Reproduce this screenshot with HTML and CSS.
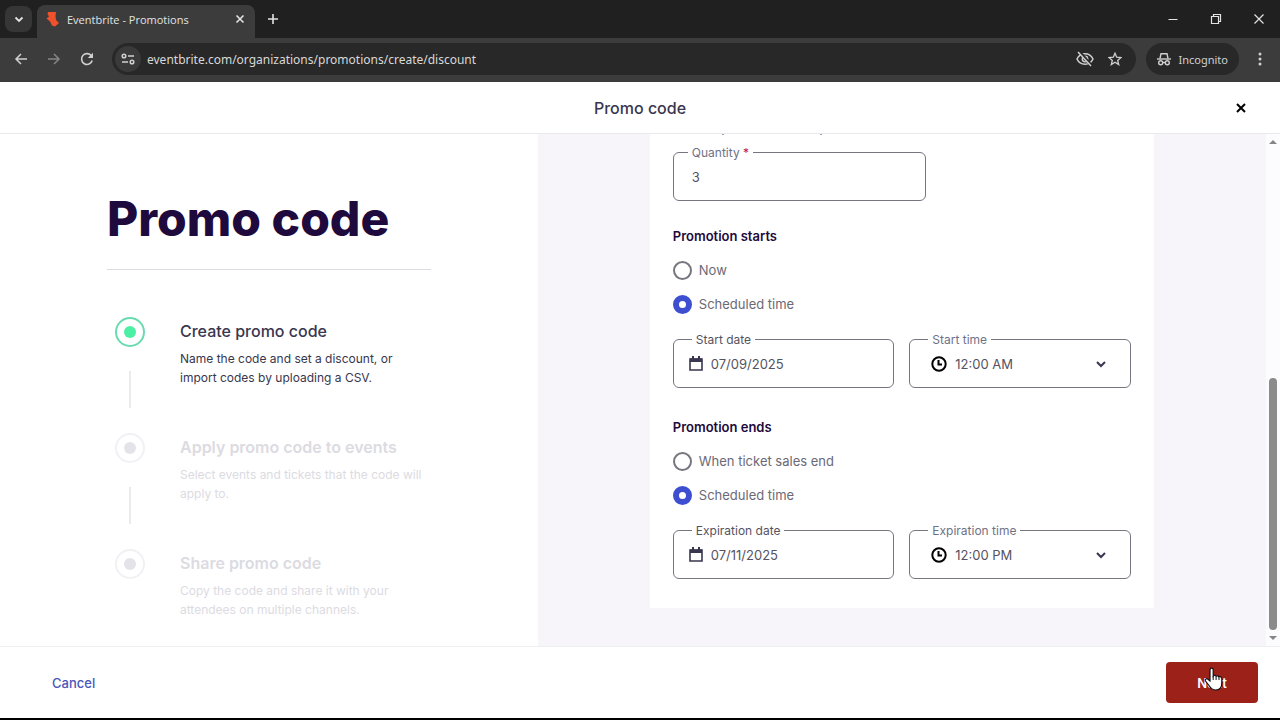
FILE: index.html
```html
<!DOCTYPE html>
<html lang="en">
<head>
    <meta charset="UTF-8">
    <meta name="viewport" content="width=device-width, initial-scale=1.0">
    <title>Eventbrite - Promotions</title>
    <link rel="stylesheet" href="styles.css">
</head>
<body>

    <!-- Browser tabs -->
    <div class="tab-strip">
        <button class="tab-search" aria-label="Search tabs">
            <svg width="10" height="10" viewBox="0 0 10 10"><path d="M1.5 3.5 5 7l3.5-3.5" fill="none" stroke="currentColor" stroke-width="1.8"/></svg>
        </button>
        <div class="tab">
            <svg width="14" height="16" viewBox="0 0 14 16"><path d="M2 1h8l-.5 4 .5 4 3 3-4 3.500-3-1-2-4L.5 7.500 3 5.500 1.500 3z" fill="#f0512d"/></svg>
            <span class="tab-title">Eventbrite - Promotions</span>
            <button class="icon-btn" aria-label="Close tab">
                <svg width="10" height="10" viewBox="0 0 10 10"><path d="M1.500 1.500l7 7M8.500 1.500l-7 7" stroke="currentColor" stroke-width="1.600"/></svg>
            </button>
        </div>
        <button class="icon-btn new-tab" aria-label="New tab">
            <svg width="12" height="12" viewBox="0 0 12 12"><path d="M6 1v10M1 6h10" stroke="currentColor" stroke-width="1.600"/></svg>
        </button>
        <div class="window-controls">
            <button class="icon-btn" aria-label="Minimize"><svg width="12" height="12" viewBox="0 0 12 12"><path d="M1.500 6.500h9" stroke="currentColor"/></svg></button>
            <button class="icon-btn" aria-label="Restore"><svg width="12" height="12" viewBox="0 0 12 12"><path d="M1.500 3.500h7v7h-7zM3.500 3.500v-2h7v7h-2" fill="none" stroke="currentColor" stroke-width="1.200"/></svg></button>
            <button class="icon-btn" aria-label="Close"><svg width="12" height="12" viewBox="0 0 12 12"><path d="M1.500 1.500l9 9M10.500 1.500l-9 9" stroke="currentColor" stroke-width="1.200"/></svg></button>
        </div>
    </div>

    <div class="toolbar">
        <div class="nav-buttons">
            <button class="icon-btn" aria-label="Back"><svg width="14" height="14" viewBox="0 0 14 14"><path d="M13 7H2M7 2 2 7l5 5" fill="none" stroke="currentColor" stroke-width="1.500"/></svg></button>
            <button class="icon-btn dim" aria-label="Forward"><svg width="14" height="14" viewBox="0 0 14 14"><path d="M1 7h11M7 2l5 5-5 5" fill="none" stroke="currentColor" stroke-width="1.500"/></svg></button>
            <button class="icon-btn" aria-label="Reload"><svg width="14" height="14" viewBox="0 0 14 14"><path d="M12.200 8.500A5.400 5.400 0 1 1 11.500 4" fill="none" stroke="currentColor" stroke-width="1.600"/><path d="M13 .8V6H7.800z" fill="currentColor"/></svg></button>
        </div>
        <div class="omnibox">
            <button class="site-info" aria-label="Site information">
                <svg width="14" height="14" viewBox="0 0 14 14" fill="none" stroke="currentColor" stroke-width="1.500"><circle cx="3" cy="4" r="1.800"/><path d="M7 4h6M1 10h6"/><circle cx="11" cy="10" r="1.800"/></svg>
            </button>
            <input class="url" type="text" aria-label="Address" value="eventbrite.com/organizations/promotions/create/discount">
            <button class="icon-btn" aria-label="Tracking blocked">
                <svg width="18" height="16" viewBox="0 0 18 16" fill="none" stroke="currentColor" stroke-width="1.500"><path d="M1 8c3.200-7 12.800-7 16 0-3.200 7-12.800 7-16 0z"/><circle cx="9" cy="8" r="2.700"/><path d="M3.500.8l12 14" stroke="#282828" stroke-width="3"/><path d="M2 1l13 14"/></svg>
            </button>
            <button class="icon-btn" aria-label="Bookmark">
                <svg width="14" height="14" viewBox="0 0 14 14"><path d="M7 1.200l1.700 4 4.300.4-3.300 2.800 1 4.200L7 10.300l-3.700 2.300 1-4.200L1 5.600l4.300-.4z" fill="none" stroke="currentColor" stroke-width="1.300"/></svg>
            </button>
        </div>
        <button class="incognito">
            <svg width="14" height="14" viewBox="0 0 14 14" fill="none" stroke="currentColor" stroke-width="1.400"><path d="M0 7h14"/><path d="M3 6.500 4 1.700h6l1 4.800"/><circle cx="3.700" cy="10.800" r="2"/><circle cx="10.300" cy="10.800" r="2"/><path d="M5.700 10.500h2.600"/></svg>
            Incognito
        </button>
        <button class="icon-btn" aria-label="Menu">
            <svg width="4" height="14" viewBox="0 0 4 14" fill="currentColor"><circle cx="2" cy="2" r="1.500"/><circle cx="2" cy="7" r="1.500"/><circle cx="2" cy="12" r="1.500"/></svg>
        </button>
    </div>

    <header class="page-header">
        <h2>Promo code</h2>
        <button class="close-btn" aria-label="Close">
            <svg width="12" height="12" viewBox="0 0 12 12"><path d="M2 2l8 8M10 2l-8 8" stroke="currentColor" stroke-width="2"/></svg>
        </button>
    </header>

    <main class="content">
        <aside class="sidebar">
            <h1>Promo code</h1>
            <ol class="steps">
                <li class="step active">
                    <div class="marker"><span class="dot"></span></div>
                    <div class="step-text">
                        <h3>Create promo code</h3>
                        <p>Name the code and set a discount, or import codes by uploading a CSV.</p>
                    </div>
                </li>
                <li class="step">
                    <div class="marker"><span class="dot"></span></div>
                    <div class="step-text">
                        <h3>Apply promo code to events</h3>
                        <p>Select events and tickets that the code will apply to.</p>
                    </div>
                </li>
                <li class="step">
                    <div class="marker"><span class="dot"></span></div>
                    <div class="step-text">
                        <h3>Share promo code</h3>
                        <p>Copy the code and share it with your attendees on multiple channels.</p>
                    </div>
                </li>
            </ol>
        </aside>

        <div class="form-panel">
            <form class="card">
                <svg class="cut-line" width="160" height="2" viewBox="0 0 160 2"><path d="M49 0h2v1h-2zM147 0h2v1h-2z" fill="#a5a3ac"/></svg>
                <div class="field quantity">
                    <label for="quantity">Quantity <span class="required">*</span></label>
                    <input id="quantity" type="text" value="3">
                </div>

                <section class="period">
                    <h4>Promotion starts</h4>
                    <label class="radio"><input type="radio" name="starts">Now</label>
                    <label class="radio"><input type="radio" name="starts" checked>Scheduled time</label>
                    <div class="row">
                        <div class="field date">
                            <label for="start-date">Start date</label>
                            <svg width="14" height="16" viewBox="0 0 14 16"><path d="M1 3h12v11H1z" fill="none" stroke="#39364f" stroke-width="1.600"/><path d="M1 2.500h12V6H1zM3 0h2v3H3zM9 0h2v3H9z" fill="#39364f"/></svg>
                            <input id="start-date" type="text" value="07/09/2025">
                        </div>
                        <div class="field time">
                            <label for="start-time">Start time</label>
                            <svg width="16" height="16" viewBox="0 0 16 16" fill="none" stroke="#000" stroke-width="2"><circle cx="8" cy="8" r="6.700"/><path d="M7.500 4v4.500H11"/></svg>
                            <select id="start-time"><option>12:00 AM</option></select>
                            <svg class="chevron" width="10" height="8" viewBox="0 0 10 8"><path d="M1 2l4 4 4-4" fill="none" stroke="#39364f" stroke-width="2"/></svg>
                        </div>
                    </div>
                </section>

                <section class="period">
                    <h4>Promotion ends</h4>
                    <label class="radio"><input type="radio" name="ends">When ticket sales end</label>
                    <label class="radio"><input type="radio" name="ends" checked>Scheduled time</label>
                    <div class="row">
                        <div class="field date">
                            <label for="end-date">Expiration date</label>
                            <svg width="14" height="16" viewBox="0 0 14 16"><path d="M1 3h12v11H1z" fill="none" stroke="#39364f" stroke-width="1.600"/><path d="M1 2.500h12V6H1zM3 0h2v3H3zM9 0h2v3H9z" fill="#39364f"/></svg>
                            <input id="end-date" type="text" value="07/11/2025">
                        </div>
                        <div class="field time">
                            <label for="end-time">Expiration time</label>
                            <svg width="16" height="16" viewBox="0 0 16 16" fill="none" stroke="#000" stroke-width="2"><circle cx="8" cy="8" r="6.700"/><path d="M7.500 4v4.500H11"/></svg>
                            <select id="end-time"><option>12:00 PM</option></select>
                            <svg class="chevron" width="10" height="8" viewBox="0 0 10 8"><path d="M1 2l4 4 4-4" fill="none" stroke="#39364f" stroke-width="2"/></svg>
                        </div>
                    </div>
                </section>
            </form>
        </div>

        <div class="scrollbar">
            <svg width="8" height="6" viewBox="0 0 8 6"><path d="M0 5l4-4 4 4z" fill="#858585"/></svg>
            <span class="thumb"></span>
            <svg width="8" height="6" viewBox="0 0 8 6"><path d="M0 1l4 4 4-4z" fill="#858585"/></svg>
        </div>
    </main>

    <footer class="actions">
        <a class="cancel" href="#">Cancel</a>
        <button class="next">Next
            <svg class="pointer" width="20" height="24" viewBox="0 0 20 24"><path d="M6 14V3c0-2.400 3.200-2.400 3.200 0v6c.8-1.200 2.600-.8 2.900.3.900-.9 2.500-.5 2.800.7 1.300-.7 2.900 0 2.900 1.600V16c0 4-2.300 7-6 7-3.600 0-5.300-2-6.800-4.500L1.500 14c-.8-1.700 1-3 2.500-1.800z" fill="#fff" stroke="#111" stroke-width="1.200"/><path d="M9.200 9v4M12.100 10v3M15 10.500V13" stroke="#111"/></svg>
        </button>
    </footer>

</body>
</html>
```
FILE: styles.css
```css
* { box-sizing: border-box; margin: 0; padding: 0; }
body {
    display: flex; flex-direction: column;
    min-height: 100vh;
    font-family: Inter, "Liberation Sans", sans-serif;
    font-size: 13px; color: #39364f; background: #fff;
    border-bottom: 2px solid #000;
}
button, input, select { font: inherit; color: inherit; border: none; background: none; outline: none; }
button { cursor: pointer; }
svg { display: block; flex-shrink: 0; }

/* browser bar */
.tab-strip {
    display: flex; align-items: center;
    height: 38px; padding-left: 5px;
    background: #202020; color: #e3e3e3;
    font-family: "Open Sans", "Noto Sans", sans-serif; font-size: 11px;
}
.tab-search {
    display: flex; align-items: center; justify-content: center;
    width: 27px; height: 26px; margin-right: 5px;
    background: #363636; border-radius: 8px;
}
.tab {
    display: flex; align-items: center; gap: 7px;
    align-self: flex-end;
    width: 218px; height: 33px; padding: 0 10px 5px 9px;
    background: #3c3c3c; border-radius: 8px 8px 0 0;
}
.tab-title { flex: 1; white-space: nowrap; }
.icon-btn { display: flex; align-items: center; justify-content: center; }
.new-tab { margin-left: 12px; }
.window-controls { display: flex; gap: 31px; margin-left: auto; padding-right: 15px; }
.toolbar {
    display: flex; align-items: center; gap: 10px;
    height: 44px; padding: 0 18px 2px 14px;
    background: #3c3c3c; color: #d0d0d0;
    font-family: "Noto Sans", "Open Sans", sans-serif; font-size: 12px;
}
.nav-buttons { display: flex; gap: 19px; margin-right: 8px; }
.dim { color: #858585; }
.omnibox {
    display: flex; align-items: center; gap: 14px; flex: 1;
    height: 32px; padding: 0 14px 0 3px;
    background: #282828; border-radius: 16px;
}
.site-info {
    display: flex; align-items: center; justify-content: center;
    width: 26px; height: 26px; margin-right: -8px;
    background: #3a3a3a; border-radius: 50%;
}
.url { flex: 1; min-width: 0; color: #d8d8d8; }
.incognito {
    display: flex; align-items: center; gap: 8px;
    height: 32px; padding: 0 11px; margin-right: 9px;
    background: #282828; border-radius: 16px; font-size: 11px;
}

/* page */
.page-header {
    display: grid; grid-template-columns: 1fr auto 1fr; align-items: center;
    height: 52px; padding-right: 33px;
    border-bottom: 1px solid #e9e8ed;
}
.page-header h2 { grid-column: 2; padding-left: 33px; font-size: 16px; font-weight: 500; }
.close-btn { justify-self: end; color: #000; }
.content { display: flex; flex: 1; }
.sidebar { width: 42%; padding: 56px 107px 20px; }
.sidebar h1 {
    padding-bottom: 21px; border-bottom: 1px solid #dbdae3;
    font-size: 48px; line-height: 58px; font-weight: 800;
    color: #1e0a3c; white-space: nowrap;
}
.steps { padding: 47px 0 0 8px; list-style: none; }
.step { display: flex; gap: 35px; height: 116px; color: #dcdbe2; }
.step:last-child { height: auto; }
.marker { display: flex; flex-direction: column; align-items: center; }
.dot { width: 30px; height: 30px; border: 2px solid #f1f0f4; border-radius: 50%; }
.dot::before {
    content: ""; display: block;
    width: 12px; height: 12px; margin: 7px;
    background: #e4e3e9; border-radius: 50%;
}
.step:not(:last-child) .marker::after {
    content: ""; width: 2px; height: 37px; margin-top: 24px; background: #ebeaef;
}
.step h3 { font-size: 16px; line-height: 28px; font-weight: 600; white-space: nowrap; }
.step p { width: 250px; margin-top: 4px; font-size: 12px; line-height: 19px; }
.active { color: #39364f; }
.active h3 { font-weight: 500; }
.active .dot { border-color: #6adbb0; }
.active .dot::before { background: #4cefa4; }

.form-panel { flex: 1; padding-bottom: 38px; background: #f7f5f9; }
.card {
    max-width: 504px; margin: 0 auto; padding: 0 23px 29px;
    background: #fff;
}
.cut-line { margin-bottom: 16px; }
.field {
    position: relative;
    display: flex; align-items: center;
    min-width: 0; height: 49px;
    border: 1px solid #77757f; border-radius: 6px;
}
.field label {
    position: absolute; top: -8px; left: 18px;
    padding: 0 4px; background: #fff; color: #6f7287;
    font-size: 12px; line-height: 16px;
}
.field input, .field select { flex: 1; min-width: 0; color: #55535f; }
.quantity { max-width: 253px; padding-left: 18px; }
.quantity label { left: 14px; }
.required { color: #c5162e; }
.date { padding-left: 15px; gap: 8px; }
.date label { color: #55535f; }
.time { padding: 0 24px 0 21px; gap: 8px; }
.time select { appearance: none; }
.period { margin-top: 25px; }
.period + .period { margin-top: 29px; }
.period h4 { font-size: 13px; line-height: 20px; font-weight: 600; color: #1e0a3c; }
.radio {
    display: flex; align-items: center; gap: 7px;
    height: 20px; margin-top: 14px; color: #6b6976;
}
.radio input {
    appearance: none; width: 19px; height: 19px;
    border: 2px solid #77757f; border-radius: 50%;
}
.radio input:checked { border: 6px solid #3d4fd0; }
.row { display: grid; grid-template-columns: 1fr 1fr; gap: 15px; margin-top: 25px; }
.scrollbar {
    display: flex; flex-direction: column; align-items: center;
    width: 14px; padding: 5px 0; background: #fcfbfd;
}
.thumb { width: 8px; height: 252px; margin: auto 0 5px; background: #8b8b8b; border-radius: 4px; }

.actions {
    display: flex; align-items: center; justify-content: space-between;
    height: 72px; padding: 0 22px 0 52px;
    border-top: 1px solid #eeedf2;
}
.cancel { color: #4a56b8; font-weight: 500; text-decoration: none; }
.next {
    position: relative;
    width: 92px; height: 41px;
    background: #9c2118; border-radius: 4px; color: #fff; font-weight: 600;
}
/* hand cursor resting on the button */
.pointer { position: absolute; top: 5px; left: 38px; }
```
